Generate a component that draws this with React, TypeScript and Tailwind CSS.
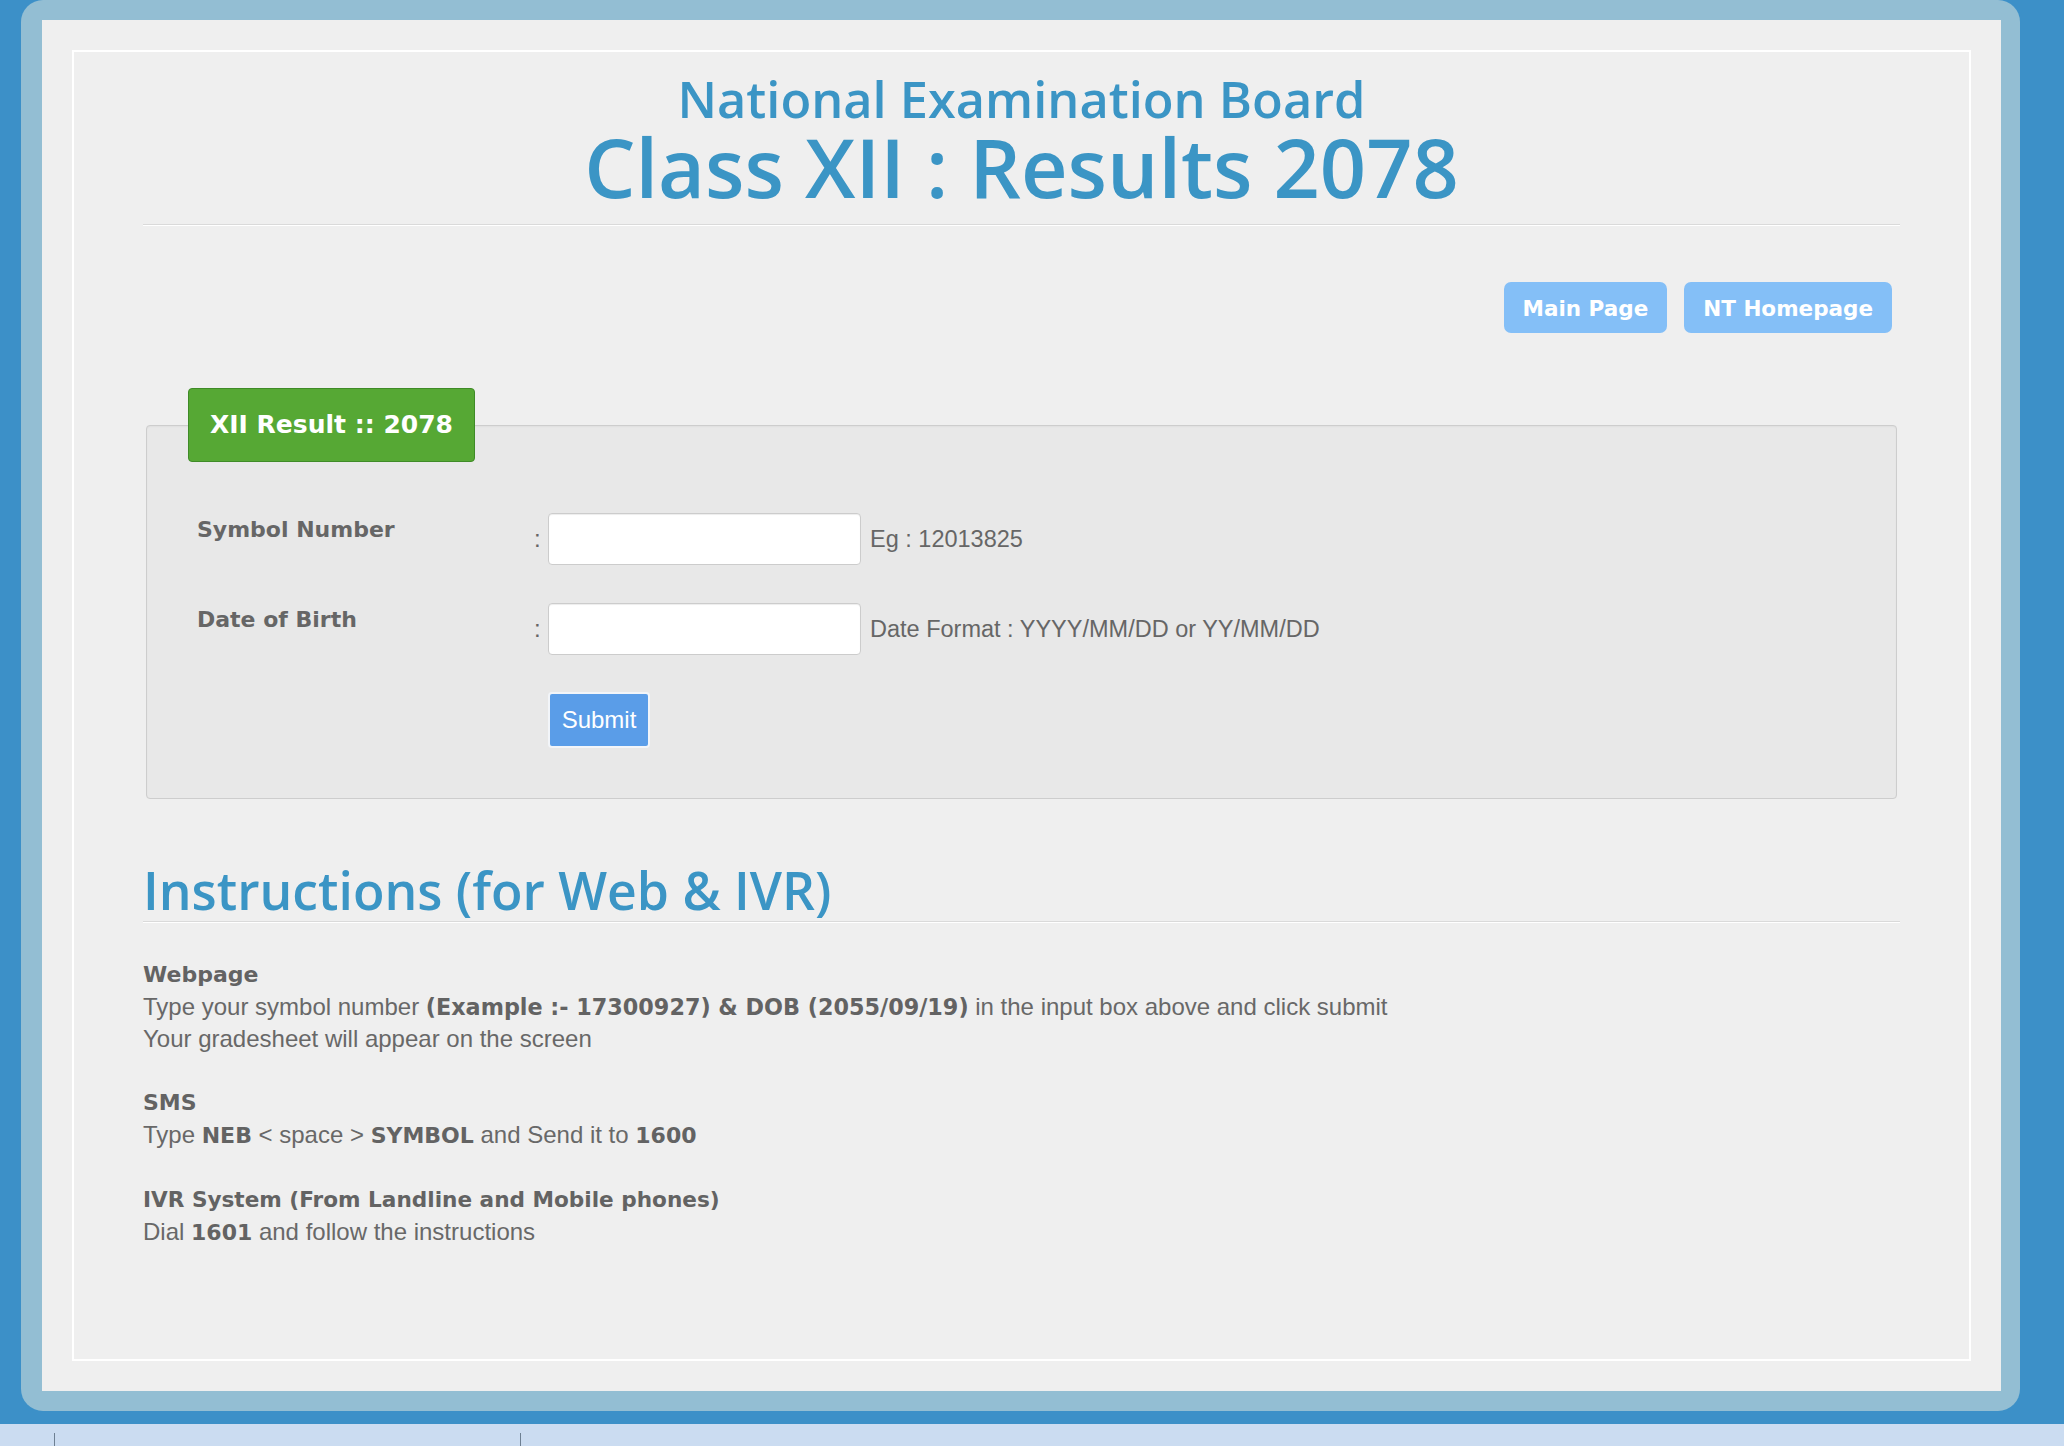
import React from "react";

const bold = "font-['DejaVu_Sans',sans-serif] font-bold";
const reg = "font-['Liberation_Sans',Arial,sans-serif]";
const head = "font-['Open_Sans',sans-serif] font-semibold text-[#3b95c5]";

function Row({ label, hint }: { label: string; hint: string }) {
  return (
    <div className="flex items-start h-[52px]">
      <div className={`${bold} w-[337px] mt-[2px] text-[22px] leading-[30px] text-[#666]`}>{label}</div>
      <div className={`${reg} w-[14px] self-center text-[24px] leading-[30px] text-[#666]`}>:</div>
      <input className="w-[313px] h-[52px] bg-white border border-[#cccccc] rounded-[4px] shadow-[inset_0_1px_1px_rgba(0,0,0,0.075)] outline-none" />
      <div className={`${reg} ml-[9px] self-center text-[23.5px] leading-[30px] text-[#666]`}>{hint}</div>
    </div>
  );
}

export default function App() {
  return (
    <div className="w-[2064px] h-[1446px] overflow-hidden bg-[#3c90c8] flex flex-col">
      <div className="ml-[21px] w-[1999px] h-[1411px] shrink-0 rounded-[22px] bg-[#93bed3] pt-[20px] pl-[21px] pr-[19px] pb-[20px]">
        <div className="h-full bg-[#efefef] p-[30px]">
          <div className="h-full border-2 border-white px-[69px]">
            <div className="pt-[17px] pb-[19px] border-b border-[#dadada] shadow-[0_1px_0_#ffffff] text-center">
              <h2 className={`${head} text-[50.5px] leading-[60px]`}>National Examination Board</h2>
              <h1 className={`${head} text-[81px] leading-[76px]`}>Class XII : Results 2078</h1>
            </div>

            <div className="flex justify-end gap-[17px] mt-[57px] pr-[8px]">
              <a className={`${bold} h-[51px] px-[19px] rounded-[7px] bg-[#84bff7] text-white text-[21.5px] leading-[53px]`}>Main Page</a>
              <a className={`${bold} h-[51px] px-[19px] rounded-[7px] bg-[#84bff7] text-white text-[21.5px] leading-[53px]`}>NT Homepage</a>
            </div>

            <fieldset className="mt-[55px] mx-[3px] border border-[#cdcdcd] rounded-[4px] bg-[#e8e8e8] pl-[41px] pb-[50px] shadow-[inset_0_1px_2px_rgba(0,0,0,0.04)]">
              <legend className={`${bold} h-[74px] px-[21px] rounded-[4px] bg-[#56a834] border border-[#3f8b27] text-white text-[25px] leading-[72px]`}>
                XII Result :: 2078
              </legend>
              <div className="ml-[9px] mt-[51px]">
                <Row label="Symbol Number" hint="Eg : 12013825" />
                <div className="mt-[38px]">
                  <Row label="Date of Birth" hint="Date Format : YYYY/MM/DD or YY/MM/DD" />
                </div>
                <button className={`${reg} mt-[37px] ml-[351px] w-[102px] h-[56px] rounded-[4px] bg-[#5a9de8] border-2 border-[#f2f5f9] text-white text-[24px]`}>
                  Submit
                </button>
              </div>
            </fieldset>

            <h3 className={`${head} mt-[61px] pb-[1px] text-[51.7px] leading-[60px] border-b border-[#dadada] shadow-[0_1px_0_#ffffff]`}>
              Instructions (for Web &amp; IVR)
            </h3>

            <div className={`${reg} mt-[37px] text-[24px] leading-[32px] text-[#686868]`}>
              <div className={`${bold} text-[22px] text-[#636363]`}>Webpage</div>
              <div>
                Type your symbol number <span className={`${bold} text-[22.3px] text-[#636363]`}>(Example :- 17300927) &amp; DOB (2055/09/19)</span> in the input box above and click submit
              </div>
              <div>Your gradesheet will appear on the screen</div>
              <div className="h-[32px]" />
              <div className={`${bold} text-[22px] text-[#636363]`}>SMS</div>
              <div>
                Type <span className={`${bold} text-[22px] text-[#636363]`}>NEB</span> &lt; space &gt;{" "}
                <span className={`${bold} text-[22px] text-[#636363]`}>SYMBOL</span> and Send it to{" "}
                <span className={`${bold} text-[22px] text-[#636363]`}>1600</span>
              </div>
              <div className="h-[32px]" />
              <div className={`${bold} text-[21.6px] text-[#636363]`}>IVR System (From Landline and Mobile phones)</div>
              <div>
                Dial <span className={`${bold} text-[22px] text-[#636363]`}>1601</span> and follow the instructions
              </div>
            </div>
          </div>
        </div>
      </div>
      <div className="mt-[13px] h-[22px] shrink-0 bg-[#cbdcf1] flex items-end">
        <div className="ml-[54px] w-px h-[13px] bg-[#6d7f92]" />
        <div className="ml-[465px] w-px h-[13px] bg-[#6d7f92]" />
      </div>
    </div>
  );
}
